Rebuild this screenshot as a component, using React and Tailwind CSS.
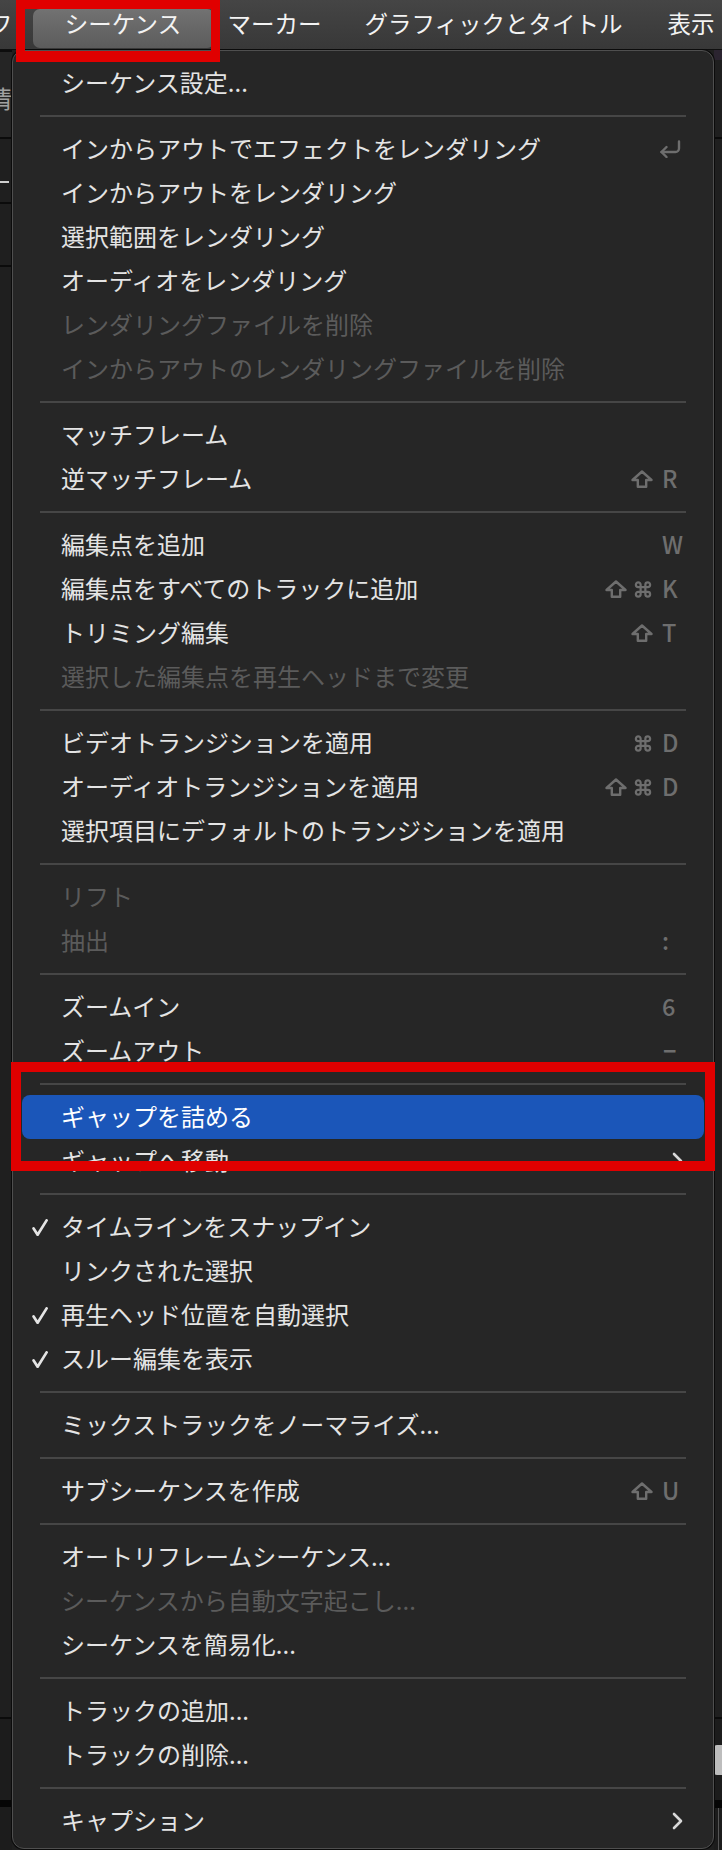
import React from "react";

const Shift = () => (
  <svg width="22" height="18" viewBox="0 0 22 18" fill="none" stroke="currentColor" strokeWidth="2.4" strokeLinejoin="round">
    <path d="M11 1.5 L20.5 10 H15.2 V16.8 H6.8 V10 H1.5 Z" />
  </svg>
);

const Cmd = () => (
  <svg width="20" height="19" viewBox="0 0 24 24" fill="none" stroke="currentColor" strokeWidth="2.8" strokeLinecap="round" strokeLinejoin="round">
    <path d="M15 6v12a3 3 0 1 0 3-3H6a3 3 0 1 0 3 3V6a3 3 0 1 0-3 3h12a3 3 0 1 0-3-3" />
  </svg>
);

const Enter = () => (
  <svg width="22" height="18" viewBox="0 0 22 18" fill="none" stroke="currentColor" strokeWidth="2.4" strokeLinecap="round" strokeLinejoin="round" className="-ml-[3px]">
    <path d="M20 1.5 V8.5 a3.5 3.5 0 0 1 -3.5 3.5 H2.5" />
    <path d="M7.5 7 L2.5 12 L7.5 17" />
  </svg>
);

const Chevron = () => (
  <svg width="11" height="18" viewBox="0 0 11 18" fill="none" stroke="currentColor" strokeWidth="2.6" strokeLinecap="round" strokeLinejoin="round" className="ml-[10px]">
    <path d="M2 2 L9 9 L2 16" />
  </svg>
);

const Check = () => (
  <svg width="16" height="17" viewBox="0 0 16 17" fill="none" stroke="currentColor" strokeWidth="2.7" strokeLinecap="round" strokeLinejoin="round">
    <path d="M1.6 9.5 L5.6 15.8 L14.6 1.4" />
  </svg>
);

const sections = [
  [{ l: "シーケンス設定..." }],
  [
    { l: "インからアウトでエフェクトをレンダリング", k: "enter" },
    { l: "インからアウトをレンダリング" },
    { l: "選択範囲をレンダリング" },
    { l: "オーディオをレンダリング" },
    { l: "レンダリングファイルを削除", d: true },
    { l: "インからアウトのレンダリングファイルを削除", d: true },
  ],
  [{ l: "マッチフレーム" }, { l: "逆マッチフレーム", m: ["shift"], k: "R" }],
  [
    { l: "編集点を追加", k: "W" },
    { l: "編集点をすべてのトラックに追加", m: ["shift", "cmd"], k: "K" },
    { l: "トリミング編集", m: ["shift"], k: "T" },
    { l: "選択した編集点を再生ヘッドまで変更", d: true },
  ],
  [
    { l: "ビデオトランジションを適用", m: ["cmd"], k: "D" },
    { l: "オーディオトランジションを適用", m: ["shift", "cmd"], k: "D" },
    { l: "選択項目にデフォルトのトランジションを適用" },
  ],
  [{ l: "リフト", d: true }, { l: "抽出", d: true, k: ":" }],
  [{ l: "ズームイン", k: "6" }, { l: "ズームアウト", k: "minus" }],
  [{ l: "ギャップを詰める", hl: true }, { l: "ギャップへ移動", sub: true }],
  [
    { l: "タイムラインをスナップイン", c: true },
    { l: "リンクされた選択" },
    { l: "再生ヘッド位置を自動選択", c: true },
    { l: "スルー編集を表示", c: true },
  ],
  [{ l: "ミックストラックをノーマライズ..." }],
  [{ l: "サブシーケンスを作成", m: ["shift"], k: "U" }],
  [
    { l: "オートリフレームシーケンス..." },
    { l: "シーケンスから自動文字起こし...", d: true },
    { l: "シーケンスを簡易化..." },
  ],
  [{ l: "トラックの追加..." }, { l: "トラックの削除..." }],
  [{ l: "キャプション", sub: true }],
];

function KeyCell({ it }) {
  if (it.sub) return <Chevron />;
  if (it.k === "enter") return <Enter />;
  if (it.k === "minus")
    return <span className="font-['Liberation_Sans',sans-serif] font-bold text-[23px] leading-none ml-[1px]">−</span>;
  if (it.k) return <span className="text-[23.5px] font-medium leading-none">{it.k}</span>;
  return null;
}

function Item({ it }) {
  const color = it.hl ? "text-white" : it.d ? "text-[#5b5b5b]" : "text-[#e4e4e4]";
  return (
    <div className={`mx-[9px] h-[44px] flex items-center rounded-[8px] ${it.hl ? "bg-[#1b56b9]" : ""}`}>
      <div className="w-[39px] h-full flex items-center pl-[10px] shrink-0 text-[#e4e4e4]">
        {it.c && <Check />}
      </div>
      <div className={`flex-1 text-[24px] leading-[30px] whitespace-nowrap -mt-[2px] ${color}`}>{it.l}</div>
      {it.m && (
        <div className="flex items-center gap-[6px] mr-[9px] text-[#6e6e6e]">
          {it.m.map((m, i) => (m === "shift" ? <Shift key={i} /> : <Cmd key={i} />))}
        </div>
      )}
      <div className={`w-[24px] h-full shrink-0 flex items-center ${it.sub ? "text-[#d8d8d8]" : "text-[#6e6e6e]"}`}>
        <KeyCell it={it} />
      </div>
      <div className="w-[18px] shrink-0" />
    </div>
  );
}

function Sep() {
  return (
    <div className="h-[22px] flex items-center mx-[27px]">
      <div className="h-[2px] w-full bg-[#464646]" />
    </div>
  );
}

export default function App() {
  return (
    <div className="relative w-[722px] h-[1850px] overflow-hidden bg-[#1e1e1e] font-['Noto_Sans_CJK_JP',sans-serif]">
      {/* top menu bar */}
      <div className="h-[50px] flex items-start bg-gradient-to-b from-[#454545] to-[#383838] border-b border-[#0f0f0f] text-[#f3f3f3] text-[23.5px] leading-[24px] whitespace-nowrap overflow-hidden">
        <span className="-ml-[11px] mt-[11px] shrink-0">フ</span>
        <div className="ml-[20px] mt-[9px] w-[181px] h-[39px] shrink-0 rounded-[7px] bg-gradient-to-b from-[#727272] to-[#5c5c5c] flex justify-center pt-[2px]">
          シーケンス
        </div>
        <span className="ml-[14px] mt-[11px] shrink-0">マーカー</span>
        <span className="ml-[43px] mt-[11px] shrink-0">グラフィックとタイトル</span>
        <span className="ml-[45px] mt-[11px] shrink-0">表示</span>
      </div>

      {/* background app panels */}
      <div className="flex h-[1800px]">
        <div className="w-[12px] flex flex-col shrink-0 overflow-hidden">
          <div className="h-[2px] bg-[#0d0d0d]" />
          <div className="h-[85px] bg-[#252525] flex pt-[33px]">
            <span className="-ml-[12px] text-[24px] leading-[26px] text-[#a0a0a0]">情</span>
          </div>
          <div className="h-[2px] bg-[#0b0b0b]" />
          <div className="h-[63px] bg-[#1f1f1f] flex flex-col pt-[42px]">
            <div className="h-[2px] w-[9px] bg-[#cfcfcf]" />
          </div>
          <div className="h-[2px] bg-[#0b0b0b]" />
          <div className="h-[61px] bg-[#1f1f1f]" />
          <div className="h-[2px] bg-[#0b0b0b]" />
          <div className="h-[1450px] bg-[#1f1f1f]" />
          <div className="h-[2px] bg-[#0b0b0b]" />
          <div className="h-[81px] bg-[#1c1c1c]" />
          <div className="h-[7px] bg-[#050505]" />
          <div className="flex-1 bg-[#1c1c1c]" />
        </div>
        <div className="flex-1 bg-[#1f1f1f]" />
        <div className="w-[8px] flex flex-col shrink-0">
          <div className="h-[10px] bg-[#2b2430]" />
          <div className="h-[77px] bg-[#1f1f1f]" />
          <div className="h-[2px] bg-[#0b0b0b]" />
          <div className="h-[1578px] bg-[#1f1f1f]" />
          <div className="h-[2px] bg-[#0b0b0b]" />
          <div className="h-[26px] bg-[#1c1c1c]" />
          <div className="h-[30px] bg-[#bdbdbd] rounded-l-[3px]" />
          <div className="h-[25px] bg-[#1c1c1c]" />
          <div className="h-[8px] bg-[#050505]" />
          <div className="flex-1 bg-[#1c1c1c] flex">
            <div className="ml-[4px] w-[1px] bg-[#555555]" />
          </div>
        </div>
      </div>

      {/* dropdown menu */}
      <div className="absolute left-[12px] top-[50px] w-[702px] rounded-[12px] bg-[#262626] border border-[#4f4f4f] shadow-[0_0_0_1px_#0b0b0b] pt-[10px] pb-[5px]">
        {sections.map((sec, si) => (
          <React.Fragment key={si}>
            {si > 0 && <Sep />}
            {sec.map((it, ii) => (
              <Item key={ii} it={it} />
            ))}
          </React.Fragment>
        ))}
      </div>

      {/* red annotation boxes */}
      <div className="absolute left-[16px] top-0 w-[204px] h-[62px] border-[9px] border-b-[11px] border-[#e00000]" />
      <div className="absolute left-[11px] top-[1062px] w-[704px] h-[109px] border-[10px] border-[#e00000]" />
    </div>
  );
}
